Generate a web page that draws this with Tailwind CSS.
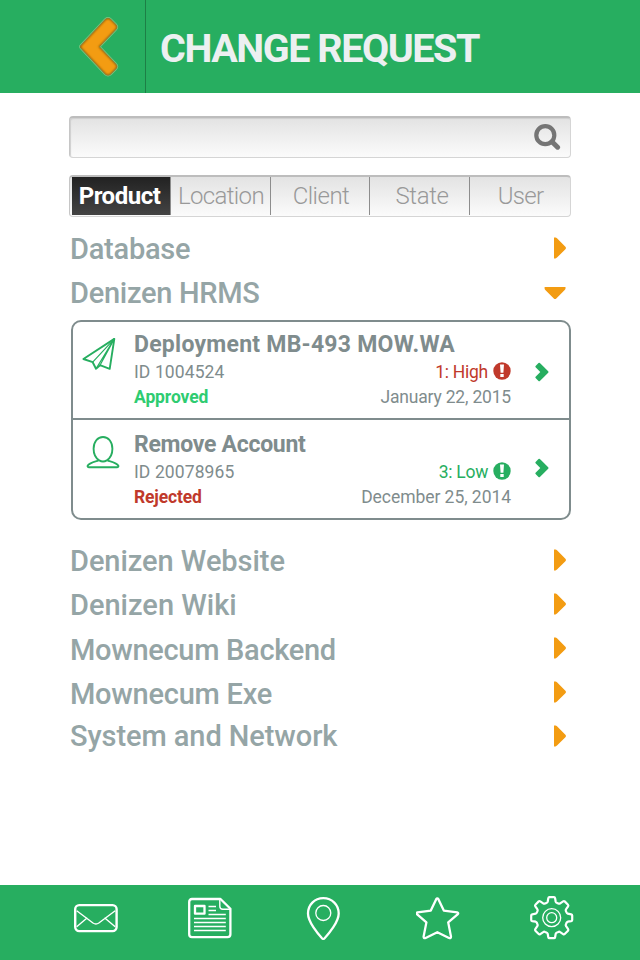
<!DOCTYPE html>
<html lang="en">
<head>
<meta charset="utf-8">
<title>Change Request</title>
<script src="https://cdn.jsdelivr.net/npm/@tailwindcss/browser@4"></script>
</head>
<body class="bg-white">
<svg class="hidden">
  <symbol id="caret" viewBox="0 0 12 22"><path d="M0 .5H1.5Q2.3 .5 3 1.2L11.4 9.7Q12.6 11 11.4 12.2L3 20.6Q2.3 21.4 1.5 21.4H0Z" fill="#f39c12"/></symbol>
  <symbol id="go" viewBox="0 0 14 20"><path d="M.6 3.9L3.5 1Q4.2 .3 4.9 1L13.2 9.3Q13.9 10 13.2 10.7L4.9 19Q4.2 19.7 3.5 19L.6 16.1Q0 15.4 .6 14.7L5.3 10L.6 5.3Q0 4.6 .6 3.9Z" fill="#27ae60"/></symbol>
  <symbol id="alert" viewBox="0 0 18 18"><circle cx="9" cy="9" r="8.7" fill="currentColor"/><path d="M7 2.6h4l-.6 8.2H7.6zM7.3 12h3.4v3H7.3z" fill="#fff"/></symbol>
</svg>
<div class="flex h-[960px] w-[640px] flex-col overflow-hidden bg-white font-[Roboto,sans-serif]">
  <header class="flex h-[93px] shrink-0 bg-[#27ae60]">
    <div class="flex w-[146px] shrink-0 justify-end border-r border-[#1d7f46] pt-[15px] pr-[25px]">
      <svg class="h-[64px] w-[42px]" viewBox="0 0 42 64">
        <defs>
          <clipPath id="c"><path d="M2.6 30L27 4Q30 1.5 33 4L38 9Q41 12 38 15L22 31.7L38 48.5Q41 51.5 38 54.5L33 59.5Q30 62 27 59.5L2.6 33.5Q1 31.7 2.6 30Z"/></clipPath>
          <filter id="b"><feGaussianBlur stdDeviation="1.3"/></filter>
        </defs>
        <path d="M2.6 30L27 4Q30 1.5 33 4L38 9Q41 12 38 15L22 31.7L38 48.5Q41 51.5 38 54.5L33 59.5Q30 62 27 59.5L2.6 33.5Q1 31.7 2.6 30Z" fill="#f39c12" stroke="#7cc983" stroke-width="1.4"/>
        <g clip-path="url(#c)"><path d="M2.6 30L27 4Q30 1.5 33 4L38 9Q41 12 38 15L22 31.7L38 48.5Q41 51.5 38 54.5L33 59.5Q30 62 27 59.5L2.6 33.5Q1 31.7 2.6 30Z" fill="none" stroke="#8a5a10" stroke-width="2.2" filter="url(#b)"/></g>
      </svg>
    </div>
    <h1 class="flex items-center pt-[5px] pl-[14px] text-[39.5px] leading-none font-bold tracking-[-1.45px] whitespace-nowrap text-[#ecf0f1]">CHANGE REQUEST</h1>
  </header>

  <main class="flex-1 pt-[23px] pr-[69px] pl-[69px]">
    <div class="flex h-[42px] w-[502px] items-start justify-end rounded-[4px] border border-t-2 border-[#d5d5d5] border-t-[#bdbdbd] border-l-[#c6c6c6] bg-linear-to-b from-[#e3e3e3] to-[#fbfbfb] pt-[5px] pr-[9px] shadow-[inset_1px_1px_1px_#cfcfcf]">
      <svg class="h-[28px] w-[28px]" viewBox="0 0 28 28" fill="none" stroke="#757575"><circle cx="12.3" cy="12.2" r="9" stroke-width="4.2"/><path d="M19 18.8L24.6 24.2" stroke-width="5" stroke-linecap="round"/></svg>
    </div>

    <nav class="mt-[17px] flex h-[42px] w-[502px] rounded-[4px] border border-t-2 border-[#d5d5d5] border-t-[#bdbdbd] border-l-[#c6c6c6] bg-linear-to-b from-[#e3e3e3] to-[#fbfbfb] pb-[1px] pl-[2px] text-[24px] leading-none font-light whitespace-nowrap text-[#999]">
      <div class="flex w-[99px] items-center justify-center border-r border-[#8d8d8d] bg-linear-to-b from-[#222] to-[#444] pr-[3px] font-bold tracking-[-0.48px] text-white">Product</div>
      <div class="flex w-[100px] items-center justify-center border-r border-[#8d8d8d] pl-[1px] tracking-[-0.66px]">Location</div>
      <div class="flex w-[99px] items-center justify-center border-r border-[#8d8d8d] pl-[2px] tracking-[-0.5px]">Client</div>
      <div class="flex w-[100px] items-center justify-center border-r border-[#8d8d8d] pl-[5px] tracking-[-0.37px]">State</div>
      <div class="flex w-[100px] items-center justify-center pl-[1px] tracking-[-0.7px]">User</div>
    </nav>

    <section class="mt-[8px] pr-[5px] pl-[1px] text-[29px] leading-[34px] font-medium whitespace-nowrap text-[#95a5a6]">
      <div class="flex h-[44px] items-center justify-between"><span class="pt-[4px] tracking-[-0.24px]">Database</span><svg class="mt-[1px] h-[22px] w-[12px]"><use href="#caret"/></svg></div>
      <div class="flex h-[44px] items-center justify-between"><span class="pt-[4px] tracking-[-0.28px]">Denizen HRMS</span><svg class="mt-[4px] h-[12px] w-[22px]" viewBox="0 0 22 12"><path d="M.6 0V1.5Q.6 2.3 1.3 3L9.8 11.4Q11 12.6 12.3 11.4L20.7 3Q21.5 2.3 21.5 1.5V0Z" fill="#f39c12"/></svg></div>
    </section>

    <section class="mt-[7px] ml-[2px] h-[200px] w-[500px] rounded-[10px] border-2 border-[#7f8c8d] text-[17.5px] whitespace-nowrap text-[#7f8c8d]">
      <article class="flex h-[98px] border-b-2 border-[#7f8c8d] pt-[10px]">
        <div class="w-[61px] shrink-0 pt-[5px] pl-[9px]">
          <svg class="h-[34px] w-[34px]" viewBox="0 0 34 34" fill="none" stroke="#27ae60" stroke-width="1.9" stroke-linejoin="round"><path d="M32.3 1.9L1.4 22L10.7 25.2L14 31.7L18 28.2L27.7 31.8Z"/><path d="M32.3 1.9L10.7 25.2M32.3 1.9L14 31.7M32.3 1.9L18 28.2" stroke-width="1.2"/></svg>
        </div>
        <div class="w-[377px]">
          <h2 class="h-[25px] text-[23px] leading-[26px] font-bold tracking-[0.25px]">Deployment MB-493 MOW.WA</h2>
          <div class="flex h-[30px] items-center justify-between leading-[30px]"><span class="tracking-[0.1px]">ID 1004524</span><span class="flex items-center gap-[5px] tracking-[-0.25px] text-[#c0392b]">1: High<svg class="mb-[3px] h-[18px] w-[18px]"><use href="#alert"/></svg></span></div>
          <div class="flex h-[20px] justify-between leading-[20px]"><span class="font-bold tracking-[-0.1px] text-[#2ecc71]">Approved</span><span class="tracking-[-0.19px]">January 22, 2015</span></div>
        </div>
        <svg class="mt-[30px] ml-[24px] h-[20px] w-[14px]"><use href="#go"/></svg>
      </article>
      <article class="flex h-[98px] pt-[12px]">
        <div class="w-[61px] shrink-0 pt-[2px] pl-[13px]">
          <svg class="h-[35px] w-[34px]" viewBox="0 0 34 35" fill="none" stroke="#27ae60" stroke-width="1.9" stroke-linejoin="round"><path d="M13.2 26.4C9.8 24.2 7.6 19.6 7.6 14.8C7.6 7.8 11.6 3 17 3S26.4 7.8 26.4 14.8C26.4 19.6 24.2 24.2 20.8 26.4Q17 28.6 13.2 26.4Z"/><path d="M12.4 26.6C8 28 2.8 29.2 1.6 31.8Q1.4 33.2 3 33.2H31Q32.6 33.2 32.4 31.8C31.2 29.2 26 28 21.6 26.6"/></svg>
        </div>
        <div class="w-[377px]">
          <h2 class="h-[25px] text-[23px] leading-[26px] font-bold tracking-[-0.28px]">Remove Account</h2>
          <div class="flex h-[30px] items-center justify-between leading-[30px]"><span class="tracking-[0.1px]">ID 20078965</span><span class="flex items-center gap-[5px] tracking-[-0.3px] text-[#27ae60]">3: Low<svg class="mb-[3px] h-[18px] w-[18px]"><use href="#alert"/></svg></span></div>
          <div class="flex h-[20px] justify-between leading-[20px]"><span class="font-bold tracking-[-0.15px] text-[#c0392b]">Rejected</span><span class="tracking-[-0.05px]">December 25, 2014</span></div>
        </div>
        <svg class="mt-[26px] ml-[24px] h-[20px] w-[14px]"><use href="#go"/></svg>
      </article>
    </section>

    <section class="mt-[18px] pr-[5px] pl-[1px] text-[29px] leading-[34px] font-medium whitespace-nowrap text-[#95a5a6]">
      <div class="flex h-[44px] items-center justify-between"><span class="pt-[2px] tracking-[-0.05px]">Denizen Website</span><svg class="h-[22px] w-[12px]"><use href="#caret"/></svg></div>
      <div class="flex h-[44px] items-center justify-between"><span class="pt-[2px]">Denizen Wiki</span><svg class="h-[22px] w-[12px]"><use href="#caret"/></svg></div>
      <div class="flex h-[44px] items-center justify-between"><span class="pt-[4px] tracking-[-0.3px]">Mownecum Backend</span><svg class="h-[22px] w-[12px]"><use href="#caret"/></svg></div>
      <div class="flex h-[44px] items-center justify-between"><span class="pt-[4px] tracking-[-0.25px]">Mownecum Exe</span><svg class="h-[22px] w-[12px]"><use href="#caret"/></svg></div>
      <div class="flex h-[44px] items-center justify-between"><span class="tracking-[-0.08px]">System and Network</span><svg class="h-[22px] w-[12px]"><use href="#caret"/></svg></div>
    </section>
  </main>

  <footer class="flex h-[75px] shrink-0 justify-between bg-[#27ae60] pt-[11px] pr-[66px] pl-[74px]">
    <svg class="h-[44px] w-[44px]" viewBox="0 0 44 44" fill="none" stroke="#fff" stroke-linejoin="round"><rect x="1.2" y="9.1" width="41.4" height="26" rx="4" stroke-width="2.4"/><path d="M2.7 14.7L19 27Q21.9 29 24.8 27L41.2 14.7M2.7 30.7L13.3 21.7M41.2 30.7L30.5 21.7" stroke-width="1.4"/></svg>
    <svg class="h-[44px] w-[44px]" viewBox="0 0 44 44" fill="none" stroke="#fff" stroke-linejoin="round"><path d="M4 3H32.5L42.4 12.8V38.3Q42.4 41.2 39.5 41.2H4Q1.2 41.2 1.2 38.3V5.9Q1.2 3 4 3Z" stroke-width="2.3"/><path d="M31.8 3V10.3Q31.8 13.3 34.8 13.3H42.4" stroke-width="1.4"/><rect x="7" y="10" width="9.5" height="7.7" stroke-width="2.3"/><path d="M20.5 10.5H28M20.5 14.5H28M20.5 18.5H37.8M6 22.5H37.8M6 26.5H37.8M6 30.5H37.8M6 34.5H37.8" stroke-width="1.4"/></svg>
    <svg class="h-[44px] w-[44px]" viewBox="0 0 44 44" fill="none" stroke="#fff" stroke-linejoin="round"><path d="M21.3 2.2C12.5 2.2 6 8.8 6 17.5C6 26 16 38 20 42.2Q21.3 43.5 22.6 42.2C26.6 38 36.7 26 36.7 17.5C36.7 8.8 30.1 2.2 21.3 2.2Z" stroke-width="2.3"/><circle cx="21.3" cy="17" r="7.5" stroke-width="1.3"/></svg>
    <svg class="h-[44px] w-[44px]" viewBox="0 0 44 44" fill="none" stroke="#fff" stroke-linejoin="round"><path d="M20.2 3.2Q21.3 1.4 22.4 3.2L27.8 14.6L41.2 16.4Q43 17 41.6 18.4L32.2 26.4L35 40.6Q35 42.8 33 42L21.3 36.2L9.6 42Q7.6 42.8 7.6 40.6L10.4 26.4L1.2 18.4Q-.3 17 1.5 16.4L14.8 14.6Z" stroke-width="2.3"/></svg>
    <svg class="h-[44px] w-[44px] overflow-visible" viewBox="0 0 44 44" fill="none" stroke="#fff" stroke-linejoin="round"><g transform="translate(21.7 21.7)"><path d="M-2.3-20.5H2.3Q3.2-20.5 3.4-19.5L4-16Q4.3-15 5.3-14.8L6.6-14.2Q7.6-13.7 8.5-14.4L11.4-16.4Q12.3-17 13-16.3L16.3-13Q17-12.3 16.4-11.4L14.4-8.5Q13.7-7.6 14.2-6.6L14.8-5.3Q15-4.3 16-4L19.5-3.4Q20.5-3.2 20.5-2.3V2.3Q20.5 3.2 19.5 3.4L16 4Q15 4.3 14.8 5.3L14.2 6.6Q13.7 7.6 14.4 8.5L16.4 11.4Q17 12.3 16.3 13L13 16.3Q12.3 17 11.4 16.4L8.5 14.4Q7.6 13.7 6.6 14.2L5.3 14.8Q4.3 15 4 16L3.4 19.5Q3.2 20.5 2.3 20.5H-2.3Q-3.2 20.5-3.4 19.5L-4 16Q-4.3 15-5.3 14.8L-6.6 14.2Q-7.6 13.7-8.5 14.4L-11.4 16.4Q-12.3 17-13 16.3L-16.3 13Q-17 12.3-16.4 11.4L-14.4 8.5Q-13.7 7.6-14.2 6.6L-14.8 5.3Q-15 4.3-16 4L-19.5 3.4Q-20.5 3.2-20.5 2.3V-2.3Q-20.5-3.2-19.5-3.4L-16-4Q-15-4.3-14.8-5.3L-14.2-6.6Q-13.7-7.6-14.4-8.5L-16.4-11.4Q-17-12.3-16.3-13L-13-16.3Q-12.3-17-11.4-16.4L-8.5-14.4Q-7.6-13.7-6.6-14.2L-5.3-14.8Q-4.3-15-4-16L-3.4-19.5Q-3.2-20.5-2.3-20.5Z" stroke-width="2.2"/><circle r="9" stroke-width="1.3"/><circle r="5" stroke-width="1.3"/></g></svg>
  </footer>
</div>
</body>
</html>
